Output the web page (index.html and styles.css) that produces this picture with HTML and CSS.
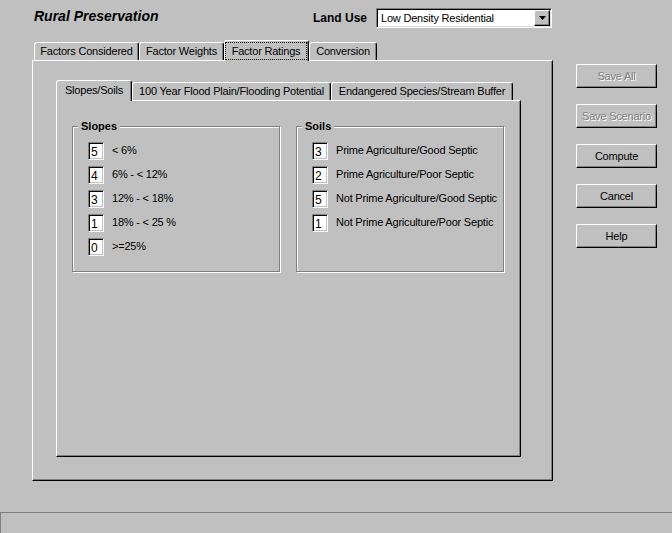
FILE: index.html
```html
<!DOCTYPE html>
<html lang="en">

<head>
    <meta charset="UTF-8">
    <title>Rural Preservation</title>
    <link rel="stylesheet" href="styles.css">
</head>

<body>
    <div class="window">
        <header class="titlebar">
            <h1 class="app-title">Rural Preservation</h1>
            <label class="land-use-label">Land Use</label>
            <div class="combo">
                <span class="combo-text">Low Density Residential</span>
                <span class="combo-btn">
                    <svg width="7" height="4" viewBox="0 0 7 4"><path d="M0 0h7L3.5 4z" fill="#000"/></svg>
                </span>
            </div>
        </header>

        <div class="main">
            <div class="tabs">
                <div class="tab-strip outer-strip">
                    <div class="tab tab-considered">Factors Considered</div>
                    <div class="tab tab-weights">Factor Weights</div>
                    <div class="tab tab-ratings active"><span class="focus">Factor Ratings</span></div>
                    <div class="tab tab-conversion">Conversion</div>
                </div>
                <div class="tab-panel outer-panel">
                    <div class="tab-strip inner-strip">
                        <div class="tab tab-slopes active">Slopes/Soils</div>
                        <div class="tab tab-flood">100 Year Flood Plain/Flooding Potential</div>
                        <div class="tab tab-species">Endangered Species/Stream Buffer</div>
                    </div>
                    <div class="tab-panel inner-panel">
                        <div class="groups">
                            <fieldset class="group">
                                <legend>Slopes</legend>
                                <div class="rows">
                                    <div class="row"><input class="rating" value="5"><span>&lt; 6%</span></div>
                                    <div class="row"><input class="rating" value="4"><span>6% - &lt; 12%</span></div>
                                    <div class="row"><input class="rating" value="3"><span>12% - &lt; 18%</span></div>
                                    <div class="row"><input class="rating" value="1"><span>18% - &lt; 25 %</span></div>
                                    <div class="row"><input class="rating" value="0"><span>&gt;=25%</span></div>
                                </div>
                            </fieldset>
                            <fieldset class="group">
                                <legend>Soils</legend>
                                <div class="rows">
                                    <div class="row"><input class="rating" value="3"><span>Prime Agriculture/Good Septic</span></div>
                                    <div class="row"><input class="rating" value="2"><span>Prime Agriculture/Poor Septic</span></div>
                                    <div class="row"><input class="rating" value="5"><span>Not Prime Agriculture/Good Septic</span></div>
                                    <div class="row"><input class="rating" value="1"><span>Not Prime Agriculture/Poor Septic</span></div>
                                </div>
                            </fieldset>
                        </div>
                    </div>
                </div>
            </div>

            <div class="buttons">
                <button class="btn" disabled>Save All</button>
                <button class="btn" disabled>Save Scenario</button>
                <button class="btn">Compute</button>
                <button class="btn">Cancel</button>
                <button class="btn">Help</button>
            </div>
        </div>

        <div class="statusbar"></div>
    </div>
</body>

</html>
```

FILE: styles.css
```css
body {
    margin: 0;
    background-color: #c0c0c0;
    font-family: 'Liberation Sans', Arial, sans-serif;
    font-size: 11px;
    letter-spacing: -0.2px;
    color: #000;
}

.window {
    width: 672px;
    height: 533px;
    display: flex;
    flex-direction: column;
}

/* header row */
.titlebar {
    display: flex;
    align-items: center;
    height: 20px;
    margin-top: 8px;
}

.app-title {
    flex: 0 0 313px;
    box-sizing: border-box;
    padding-left: 34px;
    margin: 0;
    align-self: flex-start;
    line-height: 16px;
    font-size: 14px;
    font-style: italic;
    font-weight: bold;
    letter-spacing: 0;
}

.land-use-label {
    width: 63px;
    font-size: 12px;
    font-weight: bold;
    letter-spacing: 0;
}

.combo {
    width: 176px;
    height: 20px;
    box-sizing: border-box;
    display: flex;
    align-items: center;
    padding-left: 4px;
    background-color: #fff;
    border: 1px solid;
    border-color: #808080 #fff #fff #808080;
    box-shadow: inset 1px 1px #000, inset -1px -1px #dfdfdf;
}

.combo-btn {
    margin-left: auto;
    margin-right: 1px;
    width: 16px;
    height: 16px;
    box-sizing: border-box;
    display: flex;
    align-items: center;
    justify-content: center;
    background-color: #c0c0c0;
    border: 1px solid;
    border-color: #fff #000 #000 #fff;
    box-shadow: inset -1px -1px #808080;
}

/* main area */
.main {
    display: flex;
    margin-top: 12px;
}

.tabs {
    margin-left: 32px;
}

.tab-strip {
    display: flex;
    align-items: flex-end;
    height: 20px;
}

.outer-strip {
    padding-left: 2px;
}

.tab {
    height: 18px;
    box-sizing: border-box;
    line-height: 17px;
    text-align: center;
    white-space: nowrap;
    background-color: #c0c0c0;
    border-top: 1px solid #fff;
    border-left: 1px solid #fff;
    border-right: 1px solid #000;
    border-radius: 3px 3px 0 0;
    box-shadow: inset -1px 0 #808080;
}

.tab.active {
    height: 21px;
    margin-bottom: -1px;
    position: relative;
    z-index: 1;
    line-height: 19px;
}

.tab-considered { width: 105px; }
.tab-weights { width: 85px; }
.tab-ratings { width: 85px; }
.tab-conversion { width: 68px; }

.tab-slopes { width: 76px; }
.tab-flood { width: 199px; }
.tab-species { width: 182px; }

.focus {
    display: block;
    height: 18px;
    box-sizing: border-box;
    margin: 1px 1px 0 0;
    line-height: 16px;
    border: 1px dotted #000;
}

.tab-panel {
    box-sizing: border-box;
    border: 1px solid;
    border-color: #fff #000 #000 #fff;
    box-shadow: inset -1px -1px #808080;
}

.outer-panel {
    width: 521px;
    height: 421px;
    padding: 19px 0 0 23px;
}

.inner-panel {
    width: 465px;
    height: 357px;
}

/* group boxes */
.groups {
    display: flex;
    gap: 16px;
    padding: 19px 0 0 15px;
}

.group {
    width: 208px;
    height: 152px;
    box-sizing: border-box;
    margin: 0;
    padding: 0;
    border: 1px solid #808080;
    box-shadow: 1px 1px 0 #fff, inset 1px 1px 0 #fff;
    min-width: 0;
}

.group legend {
    margin-left: 5px;
    padding: 0 3px;
    background-color: #c0c0c0;
    font-weight: bold;
    letter-spacing: 0;
    line-height: 13px;
}

.rows {
    padding: 6px 0 0 15px;
}

.row {
    display: flex;
    align-items: center;
    gap: 8px;
    height: 24px;
    white-space: nowrap;
}

.row span {
    margin-top: -3px;
}

.rating {
    width: 16px;
    height: 18px;
    box-sizing: border-box;
    margin: 0;
    padding: 1px 0 0 2px;
    font-family: inherit;
    font-size: 12px;
    color: #000;
    background-color: #fff;
    border: 1px solid;
    border-color: #808080 #fff #fff #808080;
    box-shadow: inset 1px 1px #000, inset -1px -1px #c0c0c0;
    outline: none;
}

/* button column */
.buttons {
    display: flex;
    flex-direction: column;
    gap: 16px;
    margin-left: 23px;
    padding-top: 24px;
}

.btn {
    width: 81px;
    height: 24px;
    padding: 0;
    font-family: inherit;
    font-size: 11px;
    letter-spacing: -0.2px;
    color: #000;
    background-color: #c0c0c0;
    border: 1px solid;
    border-color: #fff #000 #000 #fff;
    box-shadow: inset -1px -1px #808080;
}

.btn:disabled {
    color: #808080;
    text-shadow: 1px 1px 0 #fff;
}

.statusbar {
    margin-top: auto;
    height: 21px;
    box-sizing: border-box;
    border-top: 1px solid #808080;
    border-left: 1px solid #808080;
}
```
